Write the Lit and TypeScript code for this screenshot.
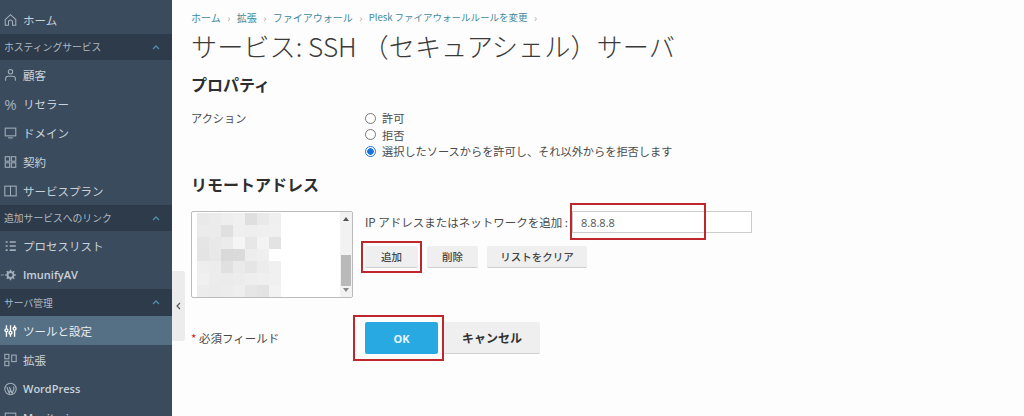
import { LitElement, html, css, svg } from "lit";
import { customElement } from "lit/decorators.js";

const icons: Record<string, unknown> = {
  home: svg`<path d="M1.500 7.500 8 1.500l6.500 6v7h-4v-4a2.500 2.500 0 0 0-5 0v4h-4z"/>`,
  user: svg`<circle cx="8" cy="4" r="2.700"/><path d="M2 15v-2.500a3 3 0 0 1 3-3h6a3 3 0 0 1 3 3v2.500"/>`,
  monitor: svg`<rect x="1.500" y="2" width="13" height="9.500"/><path d="M5 14h6"/>`,
  grid: svg`<rect x="1.500" y="1.500" width="5.500" height="5.500"/><rect x="9" y="1.500" width="5.500" height="5.500"/><rect x="1.500" y="9" width="5.500" height="5.500"/><rect x="9" y="9" width="5.500" height="5.500"/>`,
  book: svg`<rect x="1" y="2" width="14" height="12"/><path d="M8 2v12"/>`,
  list: svg`<path d="M7 3h7.500M7 8h7.500M7 13h7.500M2 3h2.500M2 8h2.500M2 13h2.500" stroke-width="2"/>`,
  gear: svg`<circle cx="8" cy="8" r="3.700" stroke-width="2.400"/><path d="M8 1.500v2M8 12.500v2M1.500 8h2M12.500 8h2M3.400 3.400l1.400 1.400M11.200 11.200l1.400 1.400M3.400 12.600l1.400-1.400M11.200 4.800l1.400-1.400" stroke-width="1.800"/><path d="M-4 8h4" stroke-width="1"/>`,
  tools: svg`<g stroke-width="1.700"><path d="M3 1v4M3 9v6M8 1v7M8 12v3M13 1v2M13 7v8"/><circle cx="3" cy="7.200" r="1.800"/><circle cx="8" cy="10.200" r="1.800"/><circle cx="13" cy="5.200" r="1.800"/></g>`,
  ext: svg`<rect x="1" y="1" width="5" height="5.500"/><rect x="1" y="9.500" width="5" height="5.500"/><rect x="9.500" y="2" width="5.500" height="8"/>`,
  wp: svg`<circle cx="8" cy="8" r="7"/><path d="M3.500 5.500 6.500 13.500 8.500 7.500M6.500 5.500 10 13.500 12 8.500c.6-1.500.3-2.500-.5-3.500" stroke-width="1.400"/>`,
};

type Row =
  | { kind: "item"; label: string; icon?: string; active?: boolean; glyph?: string }
  | { kind: "section"; label: string };

const rows: Row[] = [
  { kind: "item", label: "ホーム", icon: "home" },
  { kind: "section", label: "ホスティングサービス" },
  { kind: "item", label: "顧客", icon: "user" },
  { kind: "item", label: "リセラー", glyph: "%" },
  { kind: "item", label: "ドメイン", icon: "monitor" },
  { kind: "item", label: "契約", icon: "grid" },
  { kind: "item", label: "サービスプラン", icon: "book" },
  { kind: "section", label: "追加サービスへのリンク" },
  { kind: "item", label: "プロセスリスト", icon: "list" },
  { kind: "item", label: "ImunifyAV", icon: "gear" },
  { kind: "section", label: "サーバ管理" },
  { kind: "item", label: "ツールと設定", icon: "tools", active: true },
  { kind: "item", label: "拡張", icon: "ext" },
  { kind: "item", label: "WordPress", icon: "wp" },
  { kind: "item", label: "Monitoring", icon: "monitor" },
];

const mosaic = [
  "#e9e9e9 #ebebeb #eeeeee #f0f0f0 #dfdfdf #e9e9e9 #efefef",
  "#ebebeb #ebebeb #e0e0e0 #efefef #eeeeee #efefef #f0f0f0",
  "#e5e5e5 #e9e9e9 #ebebeb #f5f5f5 #e7e7e7 #f3f3f3 #e3e3e3",
  "#e4e4e4 #e8e8e8 #d9d9d9 #dadada #ededed #efefef #ffffff",
  "#eeeeee #ececec #e0e0e0 #eaeaea #e5e5e5 #ececec #f0f0f0",
  "#f0f0f0 #ececec #ebebeb #ececec #eeeeee #efefef #f0f0f0",
  "#ececec #ebebeb #ececec #eeeeee #e6e6e6 #e3e3e3 #f2f2f2",
];

const crumbs = ["ホーム", "拡張", "ファイアウォール", "Plesk ファイアウォールルールを変更"];

@customElement("app-root")
export class AppRoot extends LitElement {
  static styles = css`
    :host {
      display: flex;
      width: 1024px;
      height: 416px;
      overflow: hidden;
      background: #fdfdfd;
      font-family: "Noto Sans CJK JP", "Noto Sans", sans-serif;
      color: #4a4a4a;
      font-size: 12px;
    }
    .side {
      width: 172px;
      flex: none;
      background: #3a4b5d;
      padding-top: 5px;
      box-sizing: border-box;
      color: #c9d2da;
    }
    .item {
      height: 29px;
      display: flex;
      align-items: center;
      padding-left: 4px;
      gap: 6px;
      font-size: 11.500px;
    }
    .item.active { background: #556f84; color: #e6ecf0; }
    .item.latin { font-family: "Open Sans", sans-serif; font-weight: 600; font-size: 11px; }
    .ico {
      width: 13px;
      height: 14px;
      flex: none;
      fill: none;
      stroke: #a3afba;
      stroke-width: 1.300;
      overflow: visible;
    }
    .active .ico { stroke: #fff; }
    .pct {
      width: 13px;
      flex: none;
      color: #a3afba;
      font-family: "Open Sans", sans-serif;
      font-size: 15px;
      line-height: 14px;
      text-align: center;
    }
    .section {
      height: 26px;
      background: #2d3b4a;
      display: flex;
      align-items: center;
      justify-content: space-between;
      padding: 0 12px 0 4px;
      font-size: 9.800px;
      color: #aeb9c3;
    }
    .section.last { height: 27px; }
    .chev { width: 8px; height: 5px; fill: none; stroke: #4f8fae; stroke-width: 1.300; }
    .main {
      flex: 1;
      position: relative;
      padding: 10px 0 0 19px;
      min-width: 0;
    }
    .handle {
      position: absolute;
      left: 0;
      top: 271px;
      width: 13px;
      height: 70px;
      background: #ececec;
      border-radius: 0 3px 3px 0;
      display: flex;
      align-items: center;
      justify-content: center;
    }
    .handle svg { width: 5px; height: 8px; fill: none; stroke: #555; stroke-width: 1.200; }
    .crumbs {
      display: flex;
      align-items: center;
      gap: 6.500px;
      height: 14px;
      font-size: 10px;
      color: #3f8a9c;
      white-space: nowrap;
    }
    .crumbs .tail { font-size: 9.500px; }
    .sep { color: #aaa; font-size: 10px; }
    h1 {
      margin: 4px 0 0;
      font-size: 26.200px;
      line-height: 36px;
      font-weight: 300;
      color: #3a3a3a;
      white-space: nowrap;
    }
    h2 {
      margin: 0;
      font-size: 16px;
      line-height: 24px;
      font-weight: 700;
      color: #2e2e2e;
    }
    .props { margin-top: 8px; }
    .action {
      display: grid;
      grid-template-columns: 174px 1fr;
      margin-top: 14px;
      line-height: 16.500px;
      font-size: 11.200px;
    }
    .radio { display: flex; align-items: center; gap: 6px; white-space: nowrap; }
    .dot {
      width: 9px;
      height: 9px;
      border: 1px solid #777;
      border-radius: 50%;
      background: #fff;
      flex: none;
    }
    .dot.on {
      border-color: #1a73d8;
      background: radial-gradient(circle, #1a73d8 0 3px, #fff 3.500px);
    }
    .remote { margin-top: 12.500px; }
    .remote-body {
      display: flex;
      gap: 12px;
      margin-top: 15px;
    }
    .listbox {
      width: 162px;
      height: 87px;
      box-sizing: border-box;
      border: 1px solid #bbb;
      border-radius: 2px;
      background: #fff;
      display: flex;
      justify-content: space-between;
      flex: none;
    }
    .cells {
      display: grid;
      grid-template-columns: repeat(7, 12px);
      grid-auto-rows: 12px;
      margin: 1px 0 0 5px;
    }
    .scroll {
      width: 12px;
      background: #f2f2f2;
      display: flex;
      flex-direction: column;
      align-items: center;
      justify-content: space-between;
      padding: 5px 0;
      box-sizing: border-box;
      position: relative;
    }
    .arrow { width: 6px; height: 4px; fill: #555; }
    .arrow.down { fill: #888; }
    .thumb {
      position: absolute;
      left: 1px;
      right: 1px;
      top: 43px;
      height: 31px;
      background: #b9b9b9;
    }
    .add-row {
      display: flex;
      align-items: center;
      height: 22px;
      white-space: nowrap;
      font-size: 11.500px;
    }
    .add-label { width: 207px; flex: none; }
    .input {
      box-sizing: border-box;
      width: 180px;
      height: 22px;
      border: 1px solid #ccc;
      background: #fff;
      padding: 0 8px;
      display: flex;
      align-items: center;
      position: relative;
      font-family: "Open Sans", sans-serif;
      font-size: 11px;
      color: #555;
    }
    .btns {
      display: flex;
      gap: 9px;
      margin-top: 13px;
    }
    .btn {
      position: relative;
      height: 22px;
      box-sizing: border-box;
      background: #efefef;
      border-bottom: 1px solid #cfcfcf;
      border-radius: 2px;
      font-size: 10.500px;
      color: #444;
      display: flex;
      align-items: center;
      justify-content: center;
      font-weight: 500;
    }
    .b-add { width: 53px; }
    .b-del { width: 51px; }
    .b-clear { width: 100px; }
    .foot {
      display: flex;
      align-items: center;
      margin-top: 24px;
    }
    .req { width: 174px; font-size: 11.500px; }
    .req b { color: #c22; font-weight: 400; }
    .big {
      position: relative;
      height: 32px;
      box-sizing: border-box;
      border-radius: 2px;
      display: flex;
      align-items: center;
      justify-content: center;
      font-weight: 700;
    }
    .ok {
      width: 73px;
      background: #29a9e1;
      color: #e8f6fd;
      font-family: "Open Sans", sans-serif;
      font-size: 11px;
    }
    .cancel {
      width: 96px;
      margin-left: 6px;
      background: #efefef;
      border-bottom: 1px solid #cfcfcf;
      color: #333;
      font-size: 12px;
    }
    .mark {
      position: absolute;
      border: 2px solid #c0272d;
      box-sizing: border-box;
      pointer-events: none;
    }
    .m-input { left: -3px; top: -9px; width: 136px; height: 37px; }
    .m-add { left: -4px; top: -5px; width: 61px; height: 32px; }
    .m-ok { left: -12px; top: -7px; width: 91px; height: 46px; }
  `;

  private renderRow(r: Row, i: number) {
    if (r.kind === "section") {
      return html`<div class="section ${i === 10 ? "last" : ""}">
        <span>${r.label}</span>
        <svg class="chev" viewBox="0 0 8 5"><path d="M1 4l3-3 3 3" /></svg>
      </div>`;
    }
    const latin = /^[A-Za-z]/.test(r.label);
    return html`<div class="item ${r.active ? "active" : ""} ${latin ? "latin" : ""}">
      ${r.glyph
        ? html`<span class="pct">${r.glyph}</span>`
        : html`<svg class="ico" viewBox="0 0 16 16">${icons[r.icon!]}</svg>`}
      <span>${r.label}</span>
    </div>`;
  }

  render() {
    return html`
      <nav class="side">${rows.map((r, i) => this.renderRow(r, i))}</nav>
      <main class="main">
        <div class="handle">
          <svg viewBox="0 0 5 8"><path d="M4 1 1 4l3 3" /></svg>
        </div>
        <div class="crumbs">
          ${crumbs.map(
            (c, i) =>
              html`<span class=${i === crumbs.length - 1 ? "tail" : ""}>${c}</span
                ><span class="sep">›</span>`
          )}
        </div>
        <h1>サービス: SSH （セキュアシェル）サーバ</h1>
        <section class="props">
          <h2>プロパティ</h2>
          <div class="action">
            <div>アクション</div>
            <div>
              <div class="radio"><span class="dot"></span>許可</div>
              <div class="radio"><span class="dot"></span>拒否</div>
              <div class="radio">
                <span class="dot on"></span>選択したソースからを許可し、それ以外からを拒否します
              </div>
            </div>
          </div>
        </section>
        <section class="remote">
          <h2>リモートアドレス</h2>
          <div class="remote-body">
            <div class="listbox">
              <div class="cells">
                ${mosaic.flatMap((row) =>
                  row.split(" ").map((c) => html`<i style="background:${c}"></i>`)
                )}
              </div>
              <div class="scroll">
                <svg class="arrow" viewBox="0 0 6 4"><path d="M3 0l3 4H0z" /></svg>
                <div class="thumb"></div>
                <svg class="arrow down" viewBox="0 0 6 4"><path d="M3 4l3-4H0z" /></svg>
              </div>
            </div>
            <div>
              <div class="add-row">
                <span class="add-label">IP アドレスまたはネットワークを追加 :</span>
                <div class="input">8.8.8.8<span class="mark m-input"></span></div>
              </div>
              <div class="btns">
                <div class="btn b-add">追加<span class="mark m-add"></span></div>
                <div class="btn b-del">削除</div>
                <div class="btn b-clear">リストをクリア</div>
              </div>
            </div>
          </div>
        </section>
        <div class="foot">
          <div class="req"><b>*</b> 必須フィールド</div>
          <div class="big ok">OK<span class="mark m-ok"></span></div>
          <div class="big cancel">キャンセル</div>
        </div>
      </main>
    `;
  }
}
